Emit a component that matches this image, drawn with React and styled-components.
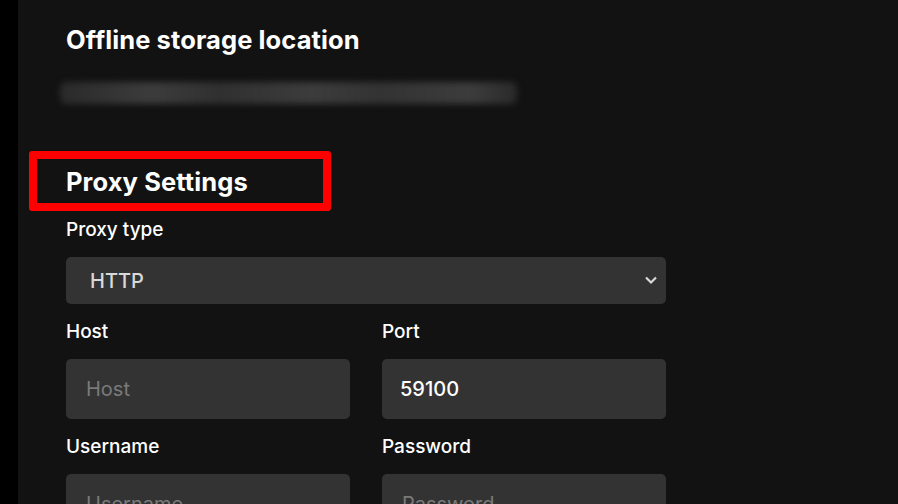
import React from "react";
import styled, { createGlobalStyle } from "styled-components";

const GlobalStyle = createGlobalStyle`
    html, body {
        margin: 0;
        padding: 0;
        background: #000;
        height: 100%;
    }
    #root {
        height: 100%;
    }
`;

const Page = styled.div`
    display: flex;
    width: 898px;
    height: 504px;
    overflow: hidden;
    background: #000;
    font-family: "Inter", "Liberation Sans", sans-serif;
`;

const Main = styled.main`
    flex: 1;
    margin-left: 18px;
    background: #121212;
    padding: 25px 0 0 48px;
    box-sizing: border-box;
`;

const SectionTitle = styled.h2`
    margin: 0;
    color: #fff;
    font-size: 25.5px;
    font-weight: 700;
    line-height: 30px;
    letter-spacing: 0.1px;
`;

const BlurredPath = styled.div`
    margin: 27px 0 0 -6px;
    width: 457px;
    height: 22px;
    border-radius: 6px;
    background: linear-gradient(90deg, #2a2a2a, #3c3c3c 20%, #303030 35%, #3c3c3c 55%, #333 70%, #3c3c3c 90%, #2a2a2a);
    filter: blur(3px);
`;

const Highlight = styled.div`
    margin: 47px 0 0 -37px;
    width: 302px;
    height: 60px;
    box-sizing: border-box;
    border: 8px solid #ff0000;
    border-radius: 3px;
    display: flex;
    align-items: center;
    padding: 2px 0 0 29px;
`;

const Label = styled.label`
    display: block;
    color: #fff;
    font-size: 19px;
    font-weight: 500;
    line-height: 22px;
    margin: ${(p) => p.$top || 17}px 0 16px;
`;

const SelectBox = styled.div`
    position: relative;
    width: 600px;
    height: 47px;
    border-radius: 5px;
    background: #333;
    display: flex;
    align-items: center;
    padding-left: 24px;
    box-sizing: border-box;
    color: #d9d9d9;
    font-size: 20px;
    font-weight: 500;
`;

const Chevron = styled.svg`
    position: absolute;
    right: 8px;
    top: 16px;
`;

const Grid = styled.div`
    display: grid;
    grid-template-columns: 284px 284px;
    column-gap: 32px;
`;

const Field = styled.div`
    display: flex;
    flex-direction: column;
`;

const Input = styled.div`
    height: 60px;
    border-radius: 5px;
    background: #333;
    display: flex;
    align-items: center;
    padding-left: ${(p) => (p.$filled ? 18 : 20)}px;
    box-sizing: border-box;
    font-size: 20px;
    font-weight: ${(p) => (p.$filled ? 500 : 400)};
    color: ${(p) => (p.$filled ? "#fff" : "#7a7a7a")};
`;

function TextField({ label, value, placeholder, top }) {
    return (
        <Field>
            <Label $top={top}>{label}</Label>
            <Input $filled={!!value}>{value || placeholder}</Input>
        </Field>
    );
}

export default function App() {
    return (
        <Page>
            <GlobalStyle />
            <Main>
                <SectionTitle>Offline storage location</SectionTitle>
                <BlurredPath />
                <Highlight>
                    <SectionTitle>Proxy Settings</SectionTitle>
                </Highlight>
                <Label $top={8}>Proxy type</Label>
                <SelectBox>
                    HTTP
                    <Chevron width="14" height="14" viewBox="0 0 14 14">
                        <path d="M2 4.5 L7 9.5 L12 4.5" fill="none" stroke="#d9d9d9" strokeWidth="2.2" />
                    </Chevron>
                </SelectBox>
                <Grid>
                    <TextField label="Host" placeholder="Host" />
                    <TextField label="Port" value="59100" />
                    <TextField label="Username" placeholder="Username" />
                    <TextField label="Password" placeholder="Password" />
                </Grid>
            </Main>
        </Page>
    );
}
